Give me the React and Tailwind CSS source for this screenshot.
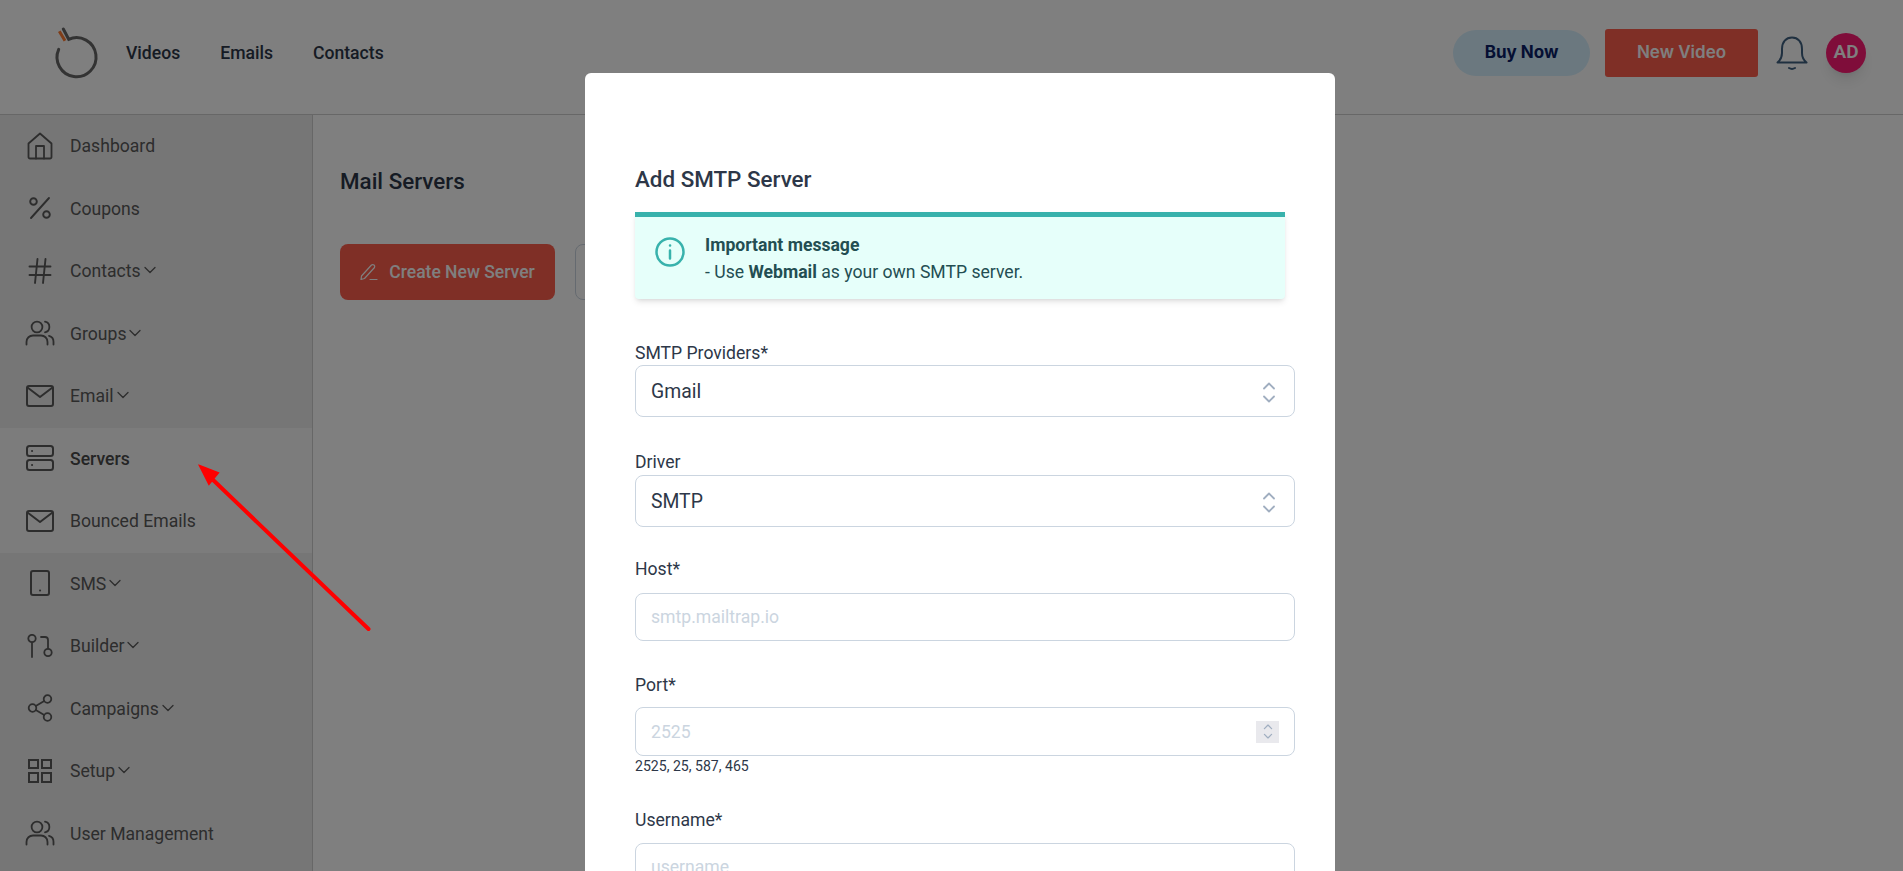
import React from 'react';

const stroke = { fill: 'none', stroke: 'currentColor', strokeWidth: 2, strokeLinecap: 'round', strokeLinejoin: 'round' };

const Users = () => (
  <svg width="30" height="26" viewBox="0 0 30 26" {...stroke} strokeWidth="1.8">
    <circle cx="12" cy="7" r="5.4" />
    <path d="M20 1.7a5.4 5.4 0 0 1 0 10.6" />
    <path d="M1.500 24.500v-2.500c0-4 3-6.500 6.500-6.500h8c3.500 0 6.500 2.500 6.500 6.500v2.500" />
    <path d="M24 15.800c2.800.7 4.500 3 4.500 6v2.700" />
  </svg>
);

const Mail = () => (
  <svg width="28" height="22" viewBox="0 0 28 22" {...stroke}>
    <rect x="1" y="1" width="26" height="20" rx="2" />
    <path d="M1.500 2.500 14 12 26.500 2.500" />
  </svg>
);

const icons = {
  home: (
    <svg width="26" height="28" viewBox="0 0 26 28" {...stroke} strokeWidth="1.8">
      <path d="M1.500 11.500 13 1.500l11.500 10v13.500a1.500 1.500 0 0 1-1.500 1.500H3a1.500 1.500 0 0 1-1.500-1.500z" />
      <path d="M9 26.500V14h8v12.500" />
    </svg>
  ),
  percent: (
    <svg width="24" height="24" viewBox="0 0 24 24" {...stroke} strokeWidth="1.9">
      <path d="M21 2 3 22" />
      <circle cx="5.500" cy="5.500" r="3.300" />
      <circle cx="18.500" cy="18.500" r="3.300" />
    </svg>
  ),
  hash: (
    <svg width="24" height="26" viewBox="0 0 24 26" {...stroke} strokeWidth="1.9">
      <path d="M1.500 8.500h21M1.500 17h21M9.500 1 7 25M17.500 1 15 25" />
    </svg>
  ),
  users: <Users />,
  mail: <Mail />,
  server: (
    <svg width="28" height="26" viewBox="0 0 28 26" {...stroke}>
      <rect x="1" y="1" width="26" height="10" rx="2.500" />
      <rect x="1" y="15" width="26" height="10" rx="2.500" />
      <path d="M6 6h.1M6 20h.1" />
    </svg>
  ),
  tablet: (
    <svg width="20" height="26" viewBox="0 0 20 26" {...stroke}>
      <rect x="1" y="1" width="18" height="24" rx="2" />
      <path d="M10 20.500h.1" />
    </svg>
  ),
  builder: (
    <svg width="26" height="24" viewBox="0 0 26 24" {...stroke} strokeWidth="1.8">
      <circle cx="5" cy="4.500" r="3.700" />
      <path d="M5 8.500V23" />
      <circle cx="21" cy="18.500" r="3.700" />
      <path d="M21 14.500V6c0-2-1-3-3-3h-4" />
    </svg>
  ),
  share: (
    <svg width="26" height="28" viewBox="0 0 26 28" {...stroke} strokeWidth="1.8">
      <circle cx="5.500" cy="14" r="3.800" />
      <circle cx="20.500" cy="5" r="3.800" />
      <circle cx="20.500" cy="23" r="3.800" />
      <path d="m8.800 12 8.400-5M8.800 16l8.400 5" />
    </svg>
  ),
  grid: (
    <svg width="26" height="26" viewBox="0 0 26 26" {...stroke} strokeLinejoin="miter" strokeLinecap="square">
      <rect x="2" y="2" width="9" height="8" />
      <rect x="15" y="2" width="9" height="8" />
      <rect x="2" y="15" width="9" height="9" />
      <rect x="15" y="15" width="9" height="9" />
    </svg>
  ),
};

const Chevron = () => (
  <svg width="12" height="8" viewBox="0 0 12 8" className="ml-[3px] mt-[-2px]" {...stroke} strokeWidth="1.3">
    <path d="m1 1.500 5 5 5-5" />
  </svg>
);

const Updown = ({ size = 14 }) => (
  <svg width={size} height={size * 1.5} viewBox="0 0 14 21" {...stroke} strokeWidth="1.800" className="text-[#a0aec0]">
    <path d="m2 6.500 5-5 5 5M2 14.500l5 5 5-5" />
  </svg>
);

const menu = [
  { label: 'Dashboard', icon: 'home' },
  { label: 'Coupons', icon: 'percent' },
  { label: 'Contacts', icon: 'hash', chevron: true },
  { label: 'Groups', icon: 'users', chevron: true },
  { label: 'Email', icon: 'mail', chevron: true },
  { label: 'Servers', icon: 'server', active: true },
  { label: 'Bounced Emails', icon: 'mail', active: true },
  { label: 'SMS', icon: 'tablet', chevron: true },
  { label: 'Builder', icon: 'builder', chevron: true },
  { label: 'Campaigns', icon: 'share', chevron: true },
  { label: 'Setup', icon: 'grid', chevron: true },
  { label: 'User Management', icon: 'users' },
];

const Logo = () => (
  <svg width="50" height="56" viewBox="0 0 50 56" fill="none" strokeWidth="3" strokeLinecap="round">
    <path d="M13.300 4 18.700 14.300 A19.500 19.500 0 1 1 8.700 24.300" stroke="#666666" />
    <path d="M9.300 6.300 15 15.700" stroke="#ff7a30" strokeLinecap="butt" />
  </svg>
);

const Label = ({ children, className = '' }) => (
  <label className={`block h-6 text-[17.600px] leading-6 text-[#2d3748] ${className}`}>{children}</label>
);

const SelectBox = ({ value }) => (
  <div className="flex h-[52px] items-center justify-between rounded-lg border border-[#cbd5e0] bg-white pl-[15px] pr-[18px] pt-[2px] text-[19.360px] text-[#2d3748]">
    <span>{value}</span>
    <Updown />
  </div>
);

const inputCls = 'block w-full h-full bg-transparent text-[17.600px] outline-none placeholder:text-[#cbd5e0]';

export default function App() {
  return (
    <div className="h-screen overflow-hidden bg-white font-['Roboto',sans-serif]">
      <header className="flex h-[115px] items-center border-b border-[#cfcfcf] pr-[37px]">
        <div className="ml-[50px] w-[76px] shrink-0 self-start pt-[25px]"><Logo /></div>
        <nav className="mt-[-8px] flex items-center gap-[40px] text-[17.600px] font-medium text-[#2d3748]">
          <a>Videos</a>
          <a>Emails</a>
          <a>Contacts</a>
        </nav>
        <div className="ml-auto mt-[-9px] flex items-center">
          <button className="h-[46px] w-[137px] rounded-full bg-[#d6f0ff] font-['Inter',sans-serif] text-[17px] font-bold text-[#0a1f66]">Buy Now</button>
          <button className="ml-[15px] h-[48px] w-[153px] rounded-[3px] bg-[#ff5e4c] font-['Inter',sans-serif] text-[17px] font-semibold text-white">New Video</button>
          <svg className="ml-[18px] text-[#3f6080]" width="32" height="34" viewBox="0 0 32 34" {...stroke}>
            <path d="M1.500 26.500c3-2.500 4.500-5 4.500-9.500v-4C6 6 10 1.500 16 1.500S26 6 26 13v4c0 4.500 1.500 7 4.500 9.500z" />
            <path d="M13 32c2 1.200 4 1.200 6 0" />
          </svg>
          <div className="ml-[18px] flex h-10 w-10 items-center justify-center rounded-full bg-[#ff1a75] text-[19px] font-semibold text-white shadow-lg">AD</div>
        </div>
      </header>

      <div className="flex h-[756px]">
        <aside className="w-[313px] shrink-0 border-r border-[#cfcfcf] bg-[#ececec]">
          {menu.map((m) => (
            <div key={m.label} className={`flex h-[62.500px] items-center text-[17.600px] text-[#5a5a5a] ${m.active ? 'bg-[#f9f9f9]' : ''}`}>
              <span className="mt-[-1px] flex w-[70px] shrink-0 justify-center pl-[10px]">{icons[m.icon]}</span>
              <span className={m.label === 'Servers' ? 'font-medium text-[#4a4a4a]' : ''}>{m.label}</span>
              {m.chevron && <Chevron />}
            </div>
          ))}
        </aside>
        <main className="flex-1 pl-[27px] pt-[48px]">
          <h1 className="text-[22.400px] font-medium leading-[36px] text-[#2d3748]">Mail Servers</h1>
          <div className="mt-[45px] flex gap-[20px]">
            <button className="flex h-[56px] w-[215px] items-center justify-center gap-[11px] rounded-lg bg-[#ff5e4c] text-[17.500px] font-medium text-white">
              <svg width="18" height="18" viewBox="0 0 18 18" {...stroke} strokeWidth="1.200">
                <path d="M1.500 13 11.500 2a2 2 0 0 1 3 2.500L4.500 15.500l-3.500 1z" />
                <path d="M10 16.500h7" />
              </svg>
              Create New Server
            </button>
            <button className="h-[56px] w-[120px] rounded-lg border border-[#cbd5e0] bg-white" />
          </div>
        </main>
      </div>

      {/* modal sits over a dimmed page */}
      <div className="fixed inset-0 overflow-hidden bg-black/50">
        <div className="ml-[585px] mt-[73px] h-[900px] w-[750px] rounded-md bg-white pl-[50px] pr-[40px] pt-[91px]">
          <h2 className="h-[30px] text-[22.400px] font-medium leading-[30px] text-[#2d3748]">Add SMTP Server</h2>
          <div className="mt-[18px] flex h-[87px] w-[650px] rounded-b border-t-[5px] border-[#38b2ac] bg-[#e6fffa] px-5 pt-[20px] text-[#234e52] shadow-md">
            <svg className="text-[#38b2ac]" width="30" height="30" viewBox="0 0 30 30" {...stroke} strokeWidth="2.500">
              <circle cx="15" cy="15" r="13.500" />
              <path d="M15 13.500V21.500M15 8.500h.1" />
            </svg>
            <div className="ml-5 mt-[-5px] text-[17.600px] leading-[27px]">
              <p className="font-bold">Important message</p>
              <p>- Use <b>Webmail</b> as your own SMTP server.</p>
            </div>
          </div>

          <Label className="mt-[42px]">SMTP Providers*</Label>
          <SelectBox value="Gmail" />

          <Label className="mb-[1px] mt-[33px]">Driver</Label>
          <SelectBox value="SMTP" />

          <Label className="mt-[30px]">Host*</Label>
          <div className="mt-[12px] h-[48px] rounded-lg border border-[#cbd5e0] px-[15px]">
            <input className={inputCls} placeholder="smtp.mailtrap.io" />
          </div>

          <Label className="mt-[32px]">Port*</Label>
          <div className="mt-[10px] flex h-[49px] items-center rounded-lg border border-[#cbd5e0] pl-[15px] pr-[15px]">
            <input className={inputCls} placeholder="2525" />
            <span className="flex h-[22px] w-[23px] shrink-0 items-center justify-center bg-[#e9e9ed]"><Updown size={10} /></span>
          </div>
          <p className="mt-[2px] h-4 text-[14.080px] leading-4 text-[#2d3748]">2525, 25, 587, 465</p>

          <Label className="mt-[34px]">Username*</Label>
          <div className="mt-[11px] h-[48px] rounded-lg border border-[#cbd5e0] px-[15px]">
            <input className={inputCls} placeholder="username" />
          </div>
        </div>
      </div>

      {/* annotation arrow over the screenshot */}
      <svg className="fixed left-0 top-0 h-[871px] w-[1903px]" viewBox="0 0 1903 871" fill="none">
        <path d="M368.500 629 210 477" stroke="#fe0000" strokeWidth="4" strokeLinecap="round" />
        <path d="M200 466 218 473 209 484z" fill="#fe0000" stroke="#fe0000" strokeWidth="2" />
      </svg>
    </div>
  );
}
